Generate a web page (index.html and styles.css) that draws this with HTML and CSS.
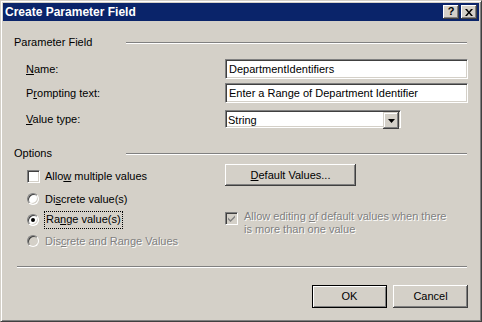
FILE: index.html
```html
<!DOCTYPE html>
<html lang="en">
<head>
  <meta charset="UTF-8" />
  <title>Create Parameter Field</title>
  <link rel="stylesheet" href="styles.css">
</head>
<body>
  <div class="window" role="dialog" aria-label="Create Parameter Field">
    <div class="titlebar">
      <span class="title">Create Parameter Field</span>
      <div class="caption-buttons">
        <button type="button" class="caption-btn help" aria-label="Help">?</button>
        <button type="button" class="caption-btn" aria-label="Close">
          <svg width="8" height="7" viewBox="0 0 8 7"><path d="M0 0h2l2 2.5L6 0h2L5 3.5 8 7H6L4 4.5 2 7H0l3-3.5z" fill="#000"/></svg>
        </button>
      </div>
    </div>

    <div class="content">
      <div class="group-head">
        <span>Parameter Field</span>
        <span class="rule"></span>
      </div>

      <div class="fields">
        <label class="field-label"><u>N</u>ame:</label>
        <div class="textbox">DepartmentIdentifiers</div>

        <label class="field-label">P<u>r</u>ompting text:</label>
        <div class="textbox">Enter a Range of Department Identifier</div>

        <label class="field-label combo-row"><u>V</u>alue type:</label>
        <div class="combo combo-row">
          <span class="combo-text">String</span>
          <span class="combo-btn">
            <svg width="7" height="4" viewBox="0 0 7 4"><path d="M0 0h7L3.5 4z" fill="#000"/></svg>
          </span>
        </div>
      </div>

      <div class="group-head options-head">
        <span>Options</span>
        <span class="rule"></span>
      </div>

      <div class="options">
        <div class="choices">
          <div class="choice first">
            <span class="check"></span>
            <span>Allo<u>w</u> multiple values</span>
          </div>
          <div class="choice radio-first">
            <span class="radio"></span>
            <span>Di<u>s</u>crete value(s)</span>
          </div>
          <div class="choice">
            <span class="radio on"></span>
            <span class="focus">Ra<u>n</u>ge value(s)</span>
          </div>
          <div class="choice">
            <span class="radio off"></span>
            <span class="disabled">Dis<u>c</u>rete and Range Values</span>
          </div>
        </div>

        <div class="side">
          <button type="button" class="btn wide"><u>D</u>efault Values...</button>
          <div class="choice note">
            <span class="check off">
              <svg width="7" height="7" viewBox="0 0 7 7"><path d="M0 2.5l2.5 2.5L7 0.5v2L2.5 7 0 4.5z" fill="#808080"/></svg>
            </span>
            <div class="disabled note-text">
              <span class="line">Allow editing <u>o</u>f default values when there</span>
              <span class="line">is more than one value</span>
            </div>
          </div>
        </div>
      </div>

      <div class="footer">
        <div class="rule bottom-rule"></div>
        <div class="actions">
          <button type="button" class="btn default">OK</button>
          <button type="button" class="btn">Cancel</button>
        </div>
      </div>
    </div>
  </div>
</body>
</html>
```

FILE: styles.css
```css
/* Classic dialog look */
*, *::before, *::after {
  box-sizing: border-box;
}
body {
  margin: 0;
  font: 11px/13px "Liberation Sans", Arial, sans-serif;
  color: #000;
  background: #d4d0c8;
}
u {
  text-decoration-thickness: 1px;
  text-underline-offset: 1px;
}
.window {
  width: 482px;
  height: 322px;
  background: #d4d0c8;
  border: 1px solid;
  border-color: #d4d0c8 #404040 #404040 #d4d0c8;
  box-shadow: inset 1px 1px #fff, inset -1px -1px #808080;
  padding: 2px;
  display: flex;
  flex-direction: column;
}
.titlebar {
  height: 18px;
  background: #0a246a;
  color: #fff;
  display: flex;
  align-items: center;
  justify-content: space-between;
  padding: 0 2px;
}
.title {
  font-weight: bold;
  font-size: 12px;
}
.caption-buttons {
  display: flex;
  gap: 2px;
}
.caption-btn {
  width: 16px;
  height: 14px;
  padding: 0;
  border: none;
  background: #d4d0c8;
  box-shadow: inset -1px -1px #404040, inset 1px 1px #fff, inset -2px -2px #808080;
  display: flex;
  align-items: center;
  justify-content: center;
  font: bold 11px/1 "Liberation Sans", Arial, sans-serif;
  color: #000;
}
.caption-btn.help {
  padding-bottom: 1px;
}
.content {
  flex: 1;
  padding: 15px 11px 0;
  display: flex;
  flex-direction: column;
}
.group-head {
  display: grid;
  grid-template-columns: 112px 1fr;
  height: 13px;
}
.rule {
  display: block;
  height: 2px;
  border-top: 1px solid #808080;
  border-bottom: 1px solid #fff;
  margin: 6px 1px 0 0;
}
.options-head {
  margin-top: 19px;
}
.fields {
  display: grid;
  grid-template-columns: 199px 1fr;
  grid-template-rows: 20px 20px 21px;
  row-gap: 4px;
  margin-top: 10px;
  padding-left: 12px;
}
.field-label {
  align-self: center;
}
.combo-row {
  margin-top: 3px;
}
.textbox,
.combo {
  background: #fff;
  border: 1px solid;
  border-color: #808080 #fff #fff #808080;
  box-shadow: inset 1px 1px #404040, inset -1px -1px #d4d0c8;
  line-height: 18px;
  padding: 0 3px;
  white-space: nowrap;
}
.combo {
  width: 176px;
  padding: 1px;
  display: flex;
  line-height: 17px;
}
.combo-text {
  flex: 1;
  padding-left: 1px;
}
.combo-btn {
  width: 16px;
  height: 17px;
  background: #d4d0c8;
  box-shadow: inset -1px -1px #404040, inset 1px 1px #d4d0c8, inset -2px -2px #808080, inset 2px 2px #fff;
  display: flex;
  align-items: center;
  justify-content: center;
}
.options {
  display: grid;
  grid-template-columns: 199px 1fr;
  margin-top: 4px;
  padding-left: 12px;
}
.choices {
  display: flex;
  flex-direction: column;
  gap: 3px;
  padding-top: 3px;
}
.choice {
  display: flex;
  align-items: center;
  gap: 5px;
  height: 18px;
  padding-left: 1px;
}
.choices .radio-first {
  margin-top: 2px;
}
.check {
  width: 13px;
  height: 13px;
  flex: none;
  background: #fff;
  border: 1px solid;
  border-color: #808080 #fff #fff #808080;
  box-shadow: inset 1px 1px #404040, inset -1px -1px #d4d0c8;
  display: flex;
  align-items: center;
  justify-content: center;
}
.check.off {
  background: #d4d0c8;
}
.radio {
  width: 12px;
  height: 12px;
  flex: none;
  margin-right: 1px;
  border-radius: 50%;
  background: #fff;
  border: 1px solid;
  border-color: #808080 #fff #fff #808080;
  box-shadow: inset 1px 1px #404040, inset -1px -1px #d4d0c8;
  display: flex;
  align-items: center;
  justify-content: center;
}
.radio.on::after {
  content: "";
  width: 4px;
  height: 4px;
  border-radius: 50%;
  background: #000;
}
.radio.off {
  background: #d4d0c8;
}
.focus {
  border: 1px dotted #000;
  padding: 1px 1px 2px;
  margin-left: -1px;
}
.disabled {
  color: #808080;
  text-shadow: 1px 1px 0 #fff;
}
.side {
  display: flex;
  flex-direction: column;
  align-items: flex-start;
}
.btn {
  height: 23px;
  width: 75px;
  padding: 0;
  border: none;
  background: #d4d0c8;
  box-shadow: inset -1px -1px #404040, inset 1px 1px #fff, inset -2px -2px #808080;
  font: 11px/13px "Liberation Sans", Arial, sans-serif;
  color: #000;
}
.btn.wide {
  width: 131px;
  height: 22px;
}
.btn.default {
  border: 1px solid #000;
  box-shadow: inset 1px 1px #fff, inset -1px -1px #808080;
}
.note {
  align-items: flex-start;
  height: auto;
  margin-top: 26px;
  padding-left: 0;
  gap: 6px;
}
.note-text {
  display: flex;
  flex-direction: column;
  margin-top: -2px;
}
.footer {
  margin-top: auto;
  padding-bottom: 11px;
}
.bottom-rule {
  margin: 0 1px 17px 3px;
}
.actions {
  display: flex;
  justify-content: flex-end;
  gap: 6px;
}
```
